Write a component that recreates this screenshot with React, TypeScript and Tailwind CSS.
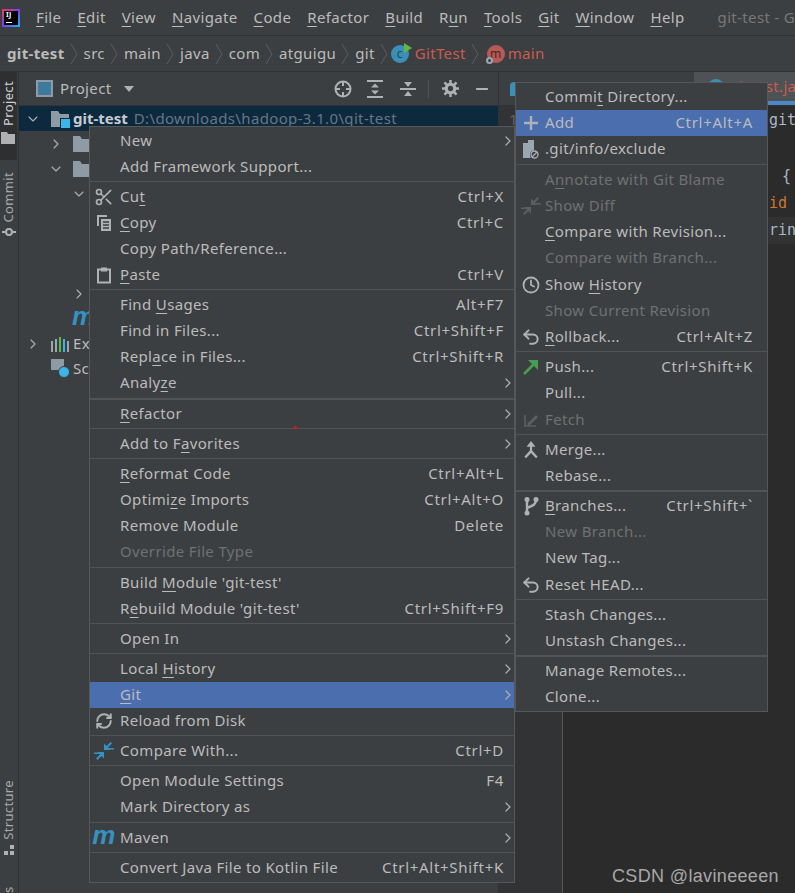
import type { ReactNode } from 'react';
import { Scissors, Clock, RefreshCw, Undo2, ChevronRight, ChevronDown, Minus } from 'lucide-react';

type MenuItem = {
  label?: string;
  shortcut?: string;
  arrow?: boolean;
  disabled?: boolean;
  active?: boolean;
  icon?: ReactNode;
  h?: number;
  sep?: 'thin' | 'thick';
  gap?: number;
};

// a "_" in a label marks the mnemonic letter
function Label({ text }: { text: string }) {
  const i = text.indexOf('_');
  if (i < 0) return <span>{text}</span>;
  return (
    <span>
      {text.slice(0, i)}
      <span className="underline underline-offset-[3px] decoration-1">{text[i + 1]}</span>
      {text.slice(i + 2)}
    </span>
  );
}

const CopyIcon = () => (
  <svg width="18" height="18" viewBox="0 0 18 18" fill="none">
    <path d="M2 1h10v2H4v9H2z" fill="#afb1b3" />
    <path d="M6 5h10v12H6z" fill="#afb1b3" />
    <path d="M8 8h6M8 11h6M8 14h6" stroke="#3c3f41" strokeWidth="1.4" />
  </svg>
);

const PasteIcon = () => (
  <svg width="18" height="18" viewBox="0 0 18 18" fill="none">
    <path d="M3 3.500h12v13H3z" stroke="#afb1b3" strokeWidth="2" />
    <path d="M6 1.500h6v4H6z" fill="#afb1b3" />
  </svg>
);

const CompareIcon = ({ color }: { color: string }) => (
  <svg width="20" height="20" viewBox="0 0 20 20" fill={color}>
    <path d="M10 9V2.500l2.500 2.500L16.500 1l1.500 1.500-4 4 2.500 2.500z" />
    <path d="M10 11v6.500L7.500 15l-4 4L2 17.500l4-4L3.500 11z" />
    <path d="M15 7h5v1.500h-5zM0 11.500h5V13H0z" />
  </svg>
);

const MavenIcon = () => (
  <span className="text-[26px] leading-none font-black italic text-[#3592c4] [font-family:'Liberation_Sans',sans-serif] -mt-[6px]">
    m
  </span>
);

const PlusIcon = () => (
  <svg width="14" height="14" viewBox="0 0 14 14" fill="none">
    <path d="M7 0v14M0 7h14" stroke="#afb1b3" strokeWidth="2.400" />
  </svg>
);

const ExcludeIcon = () => (
  <svg width="20" height="20" viewBox="0 0 20 20" fill="none">
    <path d="M2 3h5V0h6v10a5 5 0 0 0-3 8H2z" fill="#9aa7b0" />
    <circle cx="13.500" cy="14.500" r="3.500" stroke="#afb1b3" strokeWidth="1.300" />
    <path d="M11 17l5-5" stroke="#afb1b3" strokeWidth="1.300" />
  </svg>
);

const PushIcon = () => (
  <svg width="18" height="18" viewBox="0 0 18 18" fill="none">
    <path d="M2 16L14 4" stroke="#499c54" strokeWidth="2.600" />
    <path d="M6 2h10v10z" fill="#499c54" />
  </svg>
);

const FetchIcon = () => (
  <svg width="18" height="18" viewBox="0 0 18 18" fill="none">
    <path d="M3 4v11h11" stroke="#5c5e60" strokeWidth="1.600" />
    <path d="M5 13l9-9 2 2-9 9z" fill="#5c5e60" />
  </svg>
);

const MergeIcon = () => (
  <svg width="20" height="20" viewBox="0 0 18 18" fill="#afb1b3">
    <path d="M9 1l4 5H10v3.500l5 5.500-1.500 1.500L9 11.800 4.500 16.500 3 15l5-5.500V6H5z" />
  </svg>
);

const BranchIcon = () => (
  <svg width="18" height="20" viewBox="0 0 18 20" fill="none">
    <circle cx="5" cy="3.500" r="2.500" fill="#afb1b3" />
    <circle cx="5" cy="17" r="2.500" fill="#afb1b3" />
    <circle cx="14" cy="3.500" r="2.500" fill="#afb1b3" />
    <path d="M5 4v12M14 4c0 5-4 6-9 8" stroke="#afb1b3" strokeWidth="2.400" />
  </svg>
);

const GearIcon = () => (
  <svg width="17" height="17" viewBox="0 0 18 18" fill="none" className="ml-[13px]">
    <circle cx="9" cy="9" r="4.500" stroke="#afb1b3" strokeWidth="3.400" />
    <path d="M9 0v4M9 14v4M0 9h4M14 9h4M2.600 2.600l2.800 2.800M12.600 12.600l2.800 2.800M2.600 15.400l2.800-2.800M12.600 5.400l2.800-2.800" stroke="#afb1b3" strokeWidth="2.600" />
  </svg>
);

const back = <Undo2 size={20} strokeWidth={2.4} color="#afb1b3" />;

const mainMenu: MenuItem[] = [
  { label: 'New', arrow: true },
  { label: 'Add Framework Support...', sep: 'thin' },
  { label: 'Cu_t', shortcut: 'Ctrl+X', icon: <Scissors size={20} strokeWidth={2} color="#afb1b3" /> },
  { label: '_Copy', shortcut: 'Ctrl+C', icon: <CopyIcon /> },
  { label: 'Copy Path/Reference...' },
  { label: '_Paste', shortcut: 'Ctrl+V', icon: <PasteIcon />, sep: 'thin' },
  { label: 'Find _Usages', shortcut: 'Alt+F7' },
  { label: 'Find in Files...', shortcut: 'Ctrl+Shift+F' },
  { label: 'Repl_ace in Files...', shortcut: 'Ctrl+Shift+R' },
  { label: 'Analy_ze', arrow: true, sep: 'thick', gap: 5 },
  { label: '_Refactor', arrow: true, sep: 'thin' },
  { label: 'Add to F_avorites', arrow: true, sep: 'thin' },
  { label: '_Reformat Code', shortcut: 'Ctrl+Alt+L' },
  { label: 'Optimi_ze Imports', shortcut: 'Ctrl+Alt+O' },
  { label: 'Remove Module', shortcut: 'Delete' },
  { label: 'Override File Type', disabled: true, sep: 'thin', gap: 5 },
  { label: 'Build _Module \'git-test\'' },
  { label: 'R_ebuild Module \'git-test\'', shortcut: 'Ctrl+Shift+F9', sep: 'thin' },
  { label: 'Open In', arrow: true, sep: 'thin' },
  { label: 'Local _History', arrow: true },
  { label: '_Git', arrow: true, active: true },
  { label: 'Reload from Disk', icon: <RefreshCw size={18} strokeWidth={2.6} color="#afb1b3" />, sep: 'thin' },
  { label: 'Compare With...', shortcut: 'Ctrl+D', icon: <CompareIcon color="#3592c4" />, sep: 'thin' },
  { label: 'Open Module Settings', shortcut: 'F4' },
  { label: 'Mark Directory as', arrow: true, sep: 'thin', gap: 5 },
  { label: 'Maven', arrow: true, icon: <MavenIcon />, sep: 'thin' },
  { label: 'Convert Java File to Kotlin File', shortcut: 'Ctrl+Alt+Shift+K' },
];

const gitMenu: MenuItem[] = [
  { label: 'Commi_t Directory...' },
  { label: 'Add', shortcut: 'Ctrl+Alt+A', active: true, icon: <PlusIcon /> },
  { label: '.git/info/exclude', icon: <ExcludeIcon />, h: 27, sep: 'thin' },
  { label: 'A_nnotate with Git Blame', disabled: true },
  { label: 'Show Diff', disabled: true, icon: <CompareIcon color="#5c5e60" /> },
  { label: '_Compare with Revision...' },
  { label: 'Compare with Branch...', disabled: true, h: 27 },
  { label: 'Show _History', icon: <Clock size={18} strokeWidth={2.4} color="#afb1b3" /> },
  { label: 'Show Current Revision', disabled: true },
  { label: '_Rollback...', shortcut: 'Ctrl+Alt+Z', icon: back, sep: 'thin' },
  { label: 'Push...', shortcut: 'Ctrl+Shift+K', icon: <PushIcon /> },
  { label: 'Pull...', h: 27 },
  { label: 'Fetch', disabled: true, icon: <FetchIcon />, sep: 'thin' },
  { label: 'Merge...', icon: <MergeIcon /> },
  { label: 'Rebase...', sep: 'thick' },
  { label: '_Branches...', shortcut: 'Ctrl+Shift+`', icon: <BranchIcon /> },
  { label: 'New Branch...', disabled: true },
  { label: 'New Tag...', h: 27 },
  { label: 'Reset HEAD...', icon: back, sep: 'thin' },
  { label: 'Stash Changes...' },
  { label: 'Unstash Changes...', sep: 'thick' },
  { label: 'Manage Remotes...' },
  { label: 'Clone...' },
];

function Menu({ items, slot, right, className }: { items: MenuItem[]; slot: string; right: string; className: string }) {
  return (
    <div className={`absolute bg-[#3c3f41] border border-[#555759] py-px ${className}`}>
      {items.map((it) => (
        <div key={it.label}>
          <div
            className={`flex items-center ${it.h === 27 ? 'h-[27px]' : 'h-[26px]'} ${it.active ? 'bg-[#4b6eaf]' : ''} ${it.disabled ? 'text-[#6f7173]' : 'text-[#bbbbbb]'}`}
          >
            <span className={`${slot} flex justify-center items-center shrink-0`}>{it.icon}</span>
            <span className="-translate-y-px">
              <Label text={it.label || ''} />
            </span>
            {it.shortcut && <span className={`ml-auto -translate-y-px tracking-[0.7px] ${right}`}>{it.shortcut}</span>}
            {it.arrow && (
              <ChevronRight size={16} strokeWidth={1.8} color="#afb1b3" className="ml-auto mr-[-2px]" />
            )}
          </div>
          {it.sep && (
            <div className={it.gap === 5 ? 'h-[5px] pt-[2px]' : 'h-[4px] pt-px'}>
              <div className={`bg-[#515355] ${it.sep === 'thick' ? 'h-[2px]' : 'h-px'}`} />
            </div>
          )}
        </div>
      ))}
    </div>
  );
}

const Crumb = () => (
  <svg width="9" height="24" viewBox="0 0 9 24" fill="none" className="mx-[5px] shrink-0">
    <path d="M1 2l6 10-6 10" stroke="#5a5d5f" strokeWidth="1" />
  </svg>
);

const Folder = ({ badge }: { badge?: boolean }) => (
  <span className="relative w-[18px] h-[16px] shrink-0">
    <svg width="18" height="16" viewBox="0 0 18 16" fill="#8e9ba5">
      <path d="M0 0h7l2 3h9v13H0z" />
    </svg>
    {badge && <span className="absolute right-[-2px] bottom-[-2px] w-[9px] h-[9px] bg-[#3bb5e8] border border-[#0d293e] box-content" />}
  </span>
);

const menuNames = ['_File', '_Edit', '_View', '_Navigate', '_Code', '_Refactor', '_Build', 'R_un', '_Tools', '_Git', '_Window', '_Help'];
const crumbs = ['src', 'main', 'java', 'com', 'atguigu', 'git'];

function TreeRow({ indent, chevron, children, selected }: { indent: string; chevron?: 'right' | 'down'; children?: ReactNode; selected?: boolean }) {
  return (
    <div className={`h-[25px] flex items-center ${indent} ${selected ? 'bg-[#0d293e]' : ''}`}>
      <span className="w-[18px] flex justify-center shrink-0">
        {chevron === 'right' && <ChevronRight size={16} strokeWidth={1.6} color="#afb1b3" />}
        {chevron === 'down' && <ChevronDown size={16} strokeWidth={1.6} color="#afb1b3" />}
      </span>
      {children}
    </div>
  );
}

export default function App() {
  return (
    <div className="relative w-[795px] h-[893px] overflow-hidden flex flex-col bg-[#3c3f41] text-[15px] tracking-[0.35px] text-[#bbbbbb] [font-family:'Noto_Sans',sans-serif]">
      {/* menu bar */}
      <div className="h-[36px] shrink-0 flex items-center border-b border-[#323232] pl-[2px]">
        <div className="w-[18px] h-[18px] p-[2px] shrink-0 bg-[linear-gradient(135deg,#fe315d,#7b3ff2_50%,#07c3f2)]">
          <div className="w-full h-full bg-black flex flex-col px-[2px] text-[7px] leading-[8px] font-bold text-white">
            IJ
            <div className="w-[6px] h-px bg-white mt-[3px]" />
          </div>
        </div>
        <div className="flex gap-[16px] ml-[16px] text-[#bbbbbb]">
          {menuNames.map((n) => (
            <Label key={n} text={n} />
          ))}
        </div>
        <span className="ml-[33px] text-[#787878] whitespace-nowrap">git-test - GitTest.java</span>
      </div>

      {/* navigation bar */}
      <div className="h-[36px] shrink-0 flex items-center border-b border-[#323232] pl-[7px] whitespace-nowrap">
        <span className="font-bold">git-test</span>
        <Crumb />
        {crumbs.map((c) => (
          <span key={c} className="flex items-center">
            {c}
            <Crumb />
          </span>
        ))}
        <span className="relative -ml-[3px] w-[18px] h-[18px] rounded-full bg-[#3a8fb7] text-[#1f4a5f] text-[12px] leading-[18px] text-center shrink-0">
          c
          <span className="absolute top-[-2px] right-[-3px] w-0 h-0 border-y-[5px] border-y-transparent border-l-[8px] border-l-[#62b543]" />
        </span>
        <span className="ml-[6px] text-[#cc5a4f]">GitTest</span>
        <Crumb />
        <span className="relative ml-[2px] w-[18px] h-[18px] rounded-full bg-[#b65a55] text-[#4b2422] text-[12px] leading-[17px] text-center shrink-0">
          m
          <span className="absolute bottom-[-1px] left-[-1px] w-[7px] h-[7px] rounded-full border-2 border-[#9aa7b0] bg-[#3c3f41]" />
        </span>
        <span className="ml-[3px] text-[#cc5a4f]">main</span>
      </div>

      <div className="flex-1 flex min-h-0">
        {/* tool window strip */}
        <div className="w-[19px] shrink-0 flex flex-col items-center border-r border-[#323232] text-[13px]">
          <div className="w-[18px] h-[88px] bg-[#2d2f30] flex flex-col items-center pt-[9px] text-[#d0d0d0] -translate-x-px">
            <span className="[writing-mode:vertical-rl] rotate-180 leading-[16px]">Project</span>
            <svg width="14" height="12" viewBox="0 0 14 12" fill="#afb1b3" className="mt-[6px] shrink-0">
              <path d="M0 0h6l1 2h7v10H0z" />
            </svg>
          </div>
          <span className="[writing-mode:vertical-rl] rotate-180 leading-[16px] mt-[12px] text-[#a8a8a8] -translate-x-px">Commit</span>
          <svg width="14" height="10" viewBox="0 0 14 10" fill="none" className="mt-[4px] shrink-0">
            <circle cx="7" cy="5" r="3" stroke="#afb1b3" strokeWidth="2" />
            <path d="M0 5h3M11 5h3" stroke="#afb1b3" strokeWidth="2" />
          </svg>
          <span className="[writing-mode:vertical-rl] rotate-180 leading-[16px] mt-auto text-[#a8a8a8] -translate-x-px">Structure</span>
          <svg width="12" height="12" viewBox="0 0 12 12" fill="#afb1b3" className="mt-[5px] shrink-0">
            <path d="M7 0h4v4H7zM7 6h4v4H7zM1 6h4v4H1z" />
          </svg>
          <span className="[writing-mode:vertical-rl] rotate-180 leading-[16px] h-[15px] mt-[21px] text-[#a8a8a8] -translate-x-px overflow-hidden">s</span>
        </div>

        {/* project panel */}
        <div className="w-[479px] shrink-0 flex flex-col">
          <div className="h-[34px] flex items-center pl-[17px] pr-[5px] border-b border-[#323232]">
            <span className="w-[17px] h-[17px] border-2 border-[#8e9ba5] bg-[#3d7a9e] shrink-0" />
            <span className="ml-[7px]">Project</span>
            <span className="ml-[13px] w-0 h-0 border-x-[5px] border-x-transparent border-t-[6px] border-t-[#afb1b3]" />
            <svg width="18" height="18" viewBox="0 0 18 18" fill="none" className="ml-[200px]">
              <circle cx="9" cy="9" r="7.500" stroke="#afb1b3" strokeWidth="2" />
              <path d="M9 1v5M9 12v5M1 9h5M12 9h5" stroke="#afb1b3" strokeWidth="2" />
            </svg>
            <svg width="16" height="18" viewBox="0 0 16 18" fill="#afb1b3" className="ml-[15px]">
              <path d="M0 0h16v2H0zM0 16h16v2H0zM8 3.500l4 4H4zM8 14.500l-4-4h8z" />
            </svg>
            <svg width="16" height="18" viewBox="0 0 16 18" fill="#afb1b3" className="ml-[17px]">
              <path d="M0 8h16v2H0zM8 7L4 2h8zM8 11l4 5H4z" />
            </svg>
            <span className="ml-[12px] w-px h-[18px] bg-[#515355]" />
            <GearIcon />
            <Minus size={18} strokeWidth={2.4} color="#afb1b3" className="ml-[14px]" />
          </div>
          <TreeRow indent="pl-[5px]" chevron="down" selected>
            <span className="ml-[9px] flex items-center">
              <Folder badge />
            </span>
            <span className="ml-[4px] font-bold text-[#c4ccd2] tracking-normal">git-test</span>
            <span className="ml-[6px] text-[#667784] whitespace-nowrap">D:\downloads\hadoop-3.1.0\git-test</span>
          </TreeRow>
          <TreeRow indent="pl-[28px]" chevron="right">
            <span className="ml-[8px] flex"><Folder /></span>
          </TreeRow>
          <TreeRow indent="pl-[28px]" chevron="down">
            <span className="ml-[8px] flex"><Folder /></span>
          </TreeRow>
          <TreeRow indent="pl-[51px]" chevron="down" />
          <TreeRow indent="pl-[51px]" />
          <TreeRow indent="pl-[51px]" />
          <TreeRow indent="pl-[51px]" />
          <TreeRow indent="pl-[51px]" chevron="right" />
          <TreeRow indent="pl-[33px]">
            <span className="ml-[2px] text-[26px] leading-none font-black italic text-[#3592c4] [font-family:'Liberation_Sans',sans-serif] -mt-[6px]">m</span>
          </TreeRow>
          <TreeRow indent="pl-[5px]" chevron="right">
            <svg width="18" height="16" viewBox="0 0 18 16" fill="none" className="ml-[9px] shrink-0">
              <path d="M1 5v11M5 3v13" stroke="#9aa7b0" strokeWidth="2" />
              <path d="M9 1v15" stroke="#62b543" strokeWidth="2" />
              <path d="M13 3v13" stroke="#3bb5e8" strokeWidth="2" />
              <path d="M17 5v11" stroke="#9aa7b0" strokeWidth="2" />
            </svg>
            <span className="ml-[4px]">Ex</span>
          </TreeRow>
          <TreeRow indent="pl-[5px]">
            <span className="ml-[9px] relative w-[19px] h-[19px] shrink-0">
              <span className="absolute left-0 top-0 w-[13px] h-[11px] bg-[#8e9ba5]" />
              <span className="absolute right-0 bottom-0 w-[12px] h-[12px] rounded-full bg-[#3bb5e8] border border-[#3c3f41]" />
            </span>
            <span className="ml-[3px]">Sc</span>
          </TreeRow>
        </div>

        {/* editor */}
        <div className="flex-1 flex flex-col min-w-0 border-l border-[#323232]">
          <div className="h-[34px] shrink-0 flex justify-between border-b border-[#323232]">
            <div className="pl-[11px] pt-[10px]">
              <div className="w-[8px] h-[14px] bg-[#3a8fb7] rounded-t-full" />
            </div>
            <div className="w-[101px] bg-[#4e5254] flex flex-col justify-end">
              <div className="flex items-center h-[30px] pl-[14px] overflow-hidden">
                <span className="w-[16px] h-[16px] rounded-full bg-[#3a8fb7] shrink-0" />
                <span className="ml-[4px] text-[#cc5a4f] whitespace-nowrap">GitTest.java</span>
              </div>
              <div className="h-[4px] bg-[#4a88c7]" />
            </div>
          </div>
          <div className="flex-1 flex min-h-0">
            <div className="w-[64px] shrink-0 bg-[#313335] border-r border-[#555759] pl-[10px] text-[#606366] leading-[24px] pt-px">1</div>
            <div className="flex-1 bg-[#2b2b2b] [font-family:'DejaVu_Sans_Mono',monospace] text-[15px] text-[#a9b7c6] tracking-normal pl-[206px] pt-px leading-[27px] whitespace-nowrap overflow-hidden">
              <div className="h-[29px]">git</div>
              <div>&nbsp;</div>
              <div className="ml-[13px]">{'{'}</div>
              <div className="text-[#cc7832]">id</div>
              <div className="bg-[#323232] -ml-[206px] pl-[206px]">rin</div>
            </div>
          </div>
        </div>
      </div>

      <Menu items={mainMenu} slot="w-[30px] pr-[2px]" right="mr-[10px]" className="left-[89px] top-[126px] w-[426px] z-10" />
      <Menu items={gitMenu} slot="w-[29px]" right="mr-[14px]" className="left-[515px] top-[82px] w-[253px] z-20" />

      {/* red speck and watermark */}
      <span className="absolute left-[294px] top-[426px] w-[3px] h-[3px] rounded-full bg-[#f01010] z-30" />
      <span className="absolute left-[612px] top-[864px] text-[18px] leading-[24px] text-[#a8a8a8] [font-family:'Liberation_Sans',sans-serif] z-30">
        CSDN @lavineeeen
      </span>
    </div>
  );
}
